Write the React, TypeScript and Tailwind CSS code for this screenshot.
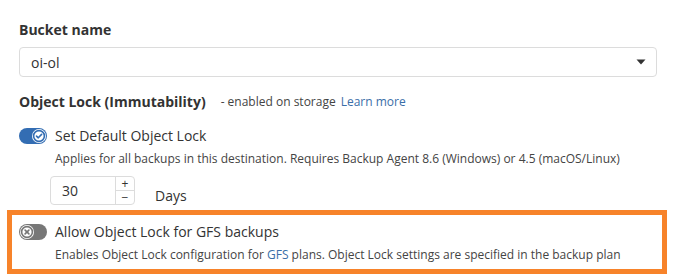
export default function App() {
  return (
    <div className="w-[676px] h-[275px] bg-white font-['Open_Sans',sans-serif] text-[#333] overflow-hidden">
      <div className="pl-[19px] pr-[19px] pt-[20px]">
        <div className="text-[14px] leading-[20px] font-bold text-[#333]">Bucket name</div>

        {/* Select */}
        <div className="mt-[7px] h-[30px] w-[638px] rounded-[4px] border border-[#dcdcdc] flex items-center justify-between pl-[11px] pr-[10px]">
          <span className="text-[14px] text-[#333]">oi-ol</span>
          <svg width="10" height="6" viewBox="0 0 10 6">
            <path d="M0.5 0.5 L9.5 0.5 L5 5.5 Z" fill="#333" />
          </svg>
        </div>

        <div className="mt-[15px] flex items-center h-[20px]">
          <span className="text-[14px] font-bold leading-[20px]">Object Lock (Immutability)</span>
          <span className="ml-[15px] text-[12px] text-[#444]">- enabled on storage</span>
          <a className="ml-[5px] text-[12px] text-[#3a6ea8]">Learn more</a>
        </div>

        {/* Default lock toggle */}
        <div className="mt-[14px] flex items-center h-[20px]">
          <Toggle on />
          <span className="ml-[8px] text-[14px] leading-[20px]">Set Default Object Lock</span>
        </div>
        <div className="ml-[36px] mt-[4px] text-[12px] leading-[18px] text-[#444]">
          Applies for all backups in this destination. Requires Backup Agent 8.6 (Windows) or 4.5 (macOS/Linux)
        </div>

        <div className="ml-[31px] mt-[8px] flex items-start">
          <div className="flex h-[29px] w-[85px] rounded-[4px] border border-[#dcdcdc]">
            <div className="flex-1 pl-[11px] flex items-center text-[14px]">30</div>
            <div className="w-[19px] border-l border-[#dcdcdc] flex flex-col">
              <div className="h-[14px] flex items-center justify-center border-b border-[#dcdcdc] text-[12px] leading-[12px] text-[#333]">+</div>
              <div className="flex-1 flex items-center justify-center text-[12px] leading-[12px] text-[#333]">−</div>
            </div>
          </div>
          <span className="ml-[20px] mt-[10px] text-[14px] leading-[20px]">Days</span>
        </div>
      </div>

      {/* Highlighted GFS option */}
      <div className="ml-[7px] mt-[4px] w-[660px] h-[64px] border-[5px] border-[#f7832a] pl-[7px] pt-[7px]">
        <div className="flex items-center h-[20px]">
          <Toggle on={false} />
          <span className="ml-[8px] text-[14px] leading-[20px]">Allow Object Lock for GFS backups</span>
        </div>
        <div className="ml-[36px] mt-[4px] text-[12px] leading-[18px] text-[#444]">
          Enables Object Lock configuration for <span className="text-[#3a6ea8]">GFS</span> plans. Object Lock settings are specified in the backup plan
        </div>
      </div>
    </div>
  );
}

function Toggle({ on }: { on: boolean }) {
  if (on) {
    return (
      <div className="relative w-[28px] h-[16px] rounded-full bg-[#336db3]">
        <div className="absolute right-[1px] top-[1px] w-[14px] h-[14px] rounded-full bg-white flex items-center justify-center">
          <svg width="14" height="14" viewBox="0 0 14 14">
            <circle cx="7" cy="7" r="5.4" fill="none" stroke="#336db3" strokeWidth="1.6" />
            <path d="M4.5 7.1 L6.3 8.8 L9.6 5.4" fill="none" stroke="#336db3" strokeWidth="1.6" strokeLinecap="round" strokeLinejoin="round" />
          </svg>
        </div>
      </div>
    );
  }
  return (
    <div className="relative w-[28px] h-[16px] rounded-full bg-[#777]">
      <div className="absolute left-[1px] top-[1px] w-[14px] h-[14px] rounded-full bg-white flex items-center justify-center">
        <svg width="14" height="14" viewBox="0 0 14 14">
          <circle cx="7" cy="7" r="5.4" fill="none" stroke="#777" strokeWidth="1.6" />
          <path d="M5.1 5.1 L8.9 8.9 M8.9 5.1 L5.1 8.9" fill="none" stroke="#777" strokeWidth="1.6" strokeLinecap="round" />
        </svg>
      </div>
    </div>
  );
}
